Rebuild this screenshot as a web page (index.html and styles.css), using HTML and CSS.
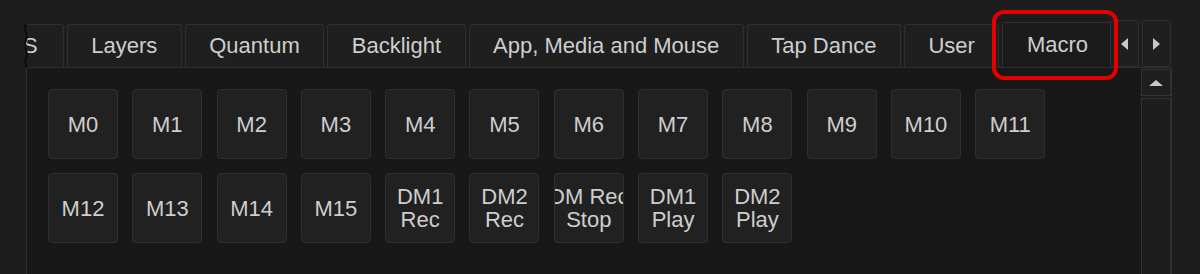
FILE: index.html
```html
<!DOCTYPE html>
<html lang="en">
<head>
  <meta charset="UTF-8">
  <title>Macro</title>
  <link rel="stylesheet" href="styles.css">
</head>
<body>
  <div class="window">
    <div class="tabbar">
      <div class="tabs">
        <div class="tab partial">S</div>
        <div class="tab">Layers</div>
        <div class="tab">Quantum</div>
        <div class="tab">Backlight</div>
        <div class="tab">App, Media and Mouse</div>
        <div class="tab">Tap Dance</div>
        <div class="tab">User</div>
        <div class="tab active">Macro</div>
      </div>
      <svg class="torn-edge" width="8" height="44" viewBox="0 0 8 44">
        <path d="M4 0 C1 6, 7 10, 4 16 C1 22, 7 28, 4 34 C2 38, 5 41, 4 44" fill="none" stroke="#0c0c0c" stroke-width="2"/>
      </svg>
      <div class="tab-arrows">
        <div class="arrow-btn"><span class="tri-left"></span></div>
        <div class="arrow-btn"><span class="tri-right"></span></div>
      </div>
      <div class="highlight"></div>
    </div>

    <div class="panel">
      <div class="content">
        <div class="keys">
          <div class="key"><span>M0</span></div>
          <div class="key"><span>M1</span></div>
          <div class="key"><span>M2</span></div>
          <div class="key"><span>M3</span></div>
          <div class="key"><span>M4</span></div>
          <div class="key"><span>M5</span></div>
          <div class="key"><span>M6</span></div>
          <div class="key"><span>M7</span></div>
          <div class="key"><span>M8</span></div>
          <div class="key"><span>M9</span></div>
          <div class="key"><span>M10</span></div>
          <div class="key"><span>M11</span></div>
          <div class="key"><span>M12</span></div>
          <div class="key"><span>M13</span></div>
          <div class="key"><span>M14</span></div>
          <div class="key"><span>M15</span></div>
          <div class="key"><span>DM1
Rec</span></div>
          <div class="key"><span>DM2
Rec</span></div>
          <div class="key"><span>DM Rec
Stop</span></div>
          <div class="key"><span>DM1
Play</span></div>
          <div class="key"><span>DM2
Play</span></div>
        </div>
      </div>
      <div class="scrollbar">
        <div class="sb-up"><span class="tri-up"></span></div>
        <div class="sb-track"></div>
      </div>
    </div>
  </div>
</body>
</html>
```

FILE: styles.css
```css
:root {
  --bg: #1d1d1d;
  --bg-panel: #181818;
  --bg-tab: #1f1f1f;
  --bg-key: #212121;
  --border: #2f2f2f;
  --text: #cecece;
  --arrow: #c8c8c8;
}

html, body {
  margin: 0;
  height: 100%;
}

body {
  background: var(--bg);
  color: var(--text);
  font-family: "Liberation Sans", Arial, sans-serif;
  font-size: 22px;
  overflow: hidden;
}

.window {
  padding: 20px 0 0 26px;
}

/* tab strip */
.tabbar {
  position: relative;
  display: flex;
  height: 47px;
}

.tabs {
  width: 1084px;
  display: flex;
  align-items: flex-end;
  overflow: hidden;
  flex-shrink: 0;
}

.tab {
  flex-shrink: 0;
  height: 43px;
  box-sizing: border-box;
  padding: 0 23.5px;
  margin-right: 3px;
  display: flex;
  align-items: center;
  justify-content: center;
  background: var(--bg-tab);
  border: 1px solid var(--border);
  border-bottom: none;
  border-radius: 3px 3px 0 0;
  white-space: nowrap;
}

.tab.partial {
  margin-left: -28px;
  padding: 0 25px 0 24px;
}

.tab.active {
  height: 46px;
  margin-bottom: -1px;
  background: #1b1b1b;
  padding-bottom: 2px;
}

.torn-edge {
  position: absolute;
  left: -4px;
  top: 4px;
}

.tab-arrows {
  display: flex;
  gap: 3px;
}

.arrow-btn {
  width: 29px;
  height: 47px;
  box-sizing: border-box;
  background: var(--bg-tab);
  border: 1px solid var(--border);
  border-radius: 3px;
  display: flex;
  align-items: center;
  justify-content: center;
}

.tri-left, .tri-right, .tri-up {
  width: 0;
  height: 0;
}

.tri-left {
  border-top: 6px solid transparent;
  border-bottom: 6px solid transparent;
  border-right: 7px solid var(--arrow);
}

.tri-right {
  border-top: 6px solid transparent;
  border-bottom: 6px solid transparent;
  border-left: 7px solid var(--arrow);
}

.tri-up {
  border-left: 7px solid transparent;
  border-right: 7px solid transparent;
  border-bottom: 6px solid var(--arrow);
}

.highlight {
  position: absolute;
  left: 966px;
  top: -10px;
  width: 126px;
  height: 70px;
  box-sizing: border-box;
  border: 4px solid #e50000;
  border-radius: 12px;
}

/* panel */
.panel {
  width: 1146px;
  height: 220px;
  box-sizing: border-box;
  background: var(--bg-panel);
  border: 1px solid var(--border);
  display: flex;
}

.content {
  flex: 1;
  padding: 21px;
}

.keys {
  display: grid;
  grid-template-columns: repeat(12, 70px);
  grid-auto-rows: 70px;
  column-gap: 14.3px;
  row-gap: 14px;
}

.key {
  background: var(--bg-key);
  border: 1px solid var(--border);
  border-radius: 4px;
  display: flex;
  align-items: center;
  justify-content: center;
  overflow: hidden;
  text-align: center;
  line-height: 23px;
}

.key span {
  white-space: pre;
}

.scrollbar {
  width: 30px;
  display: flex;
  flex-direction: column;
  gap: 2px;
  padding-top: 1px;
  background: #1c1c1c;
}

.sb-up {
  height: 27px;
  box-sizing: border-box;
  border: 1px solid #333;
  background: #1f1f1f;
  display: flex;
  align-items: center;
  justify-content: center;
}

.sb-track {
  flex: 1;
  border: 1px solid #333;
  border-bottom: none;
  background: #1d1d1d;
}
```
